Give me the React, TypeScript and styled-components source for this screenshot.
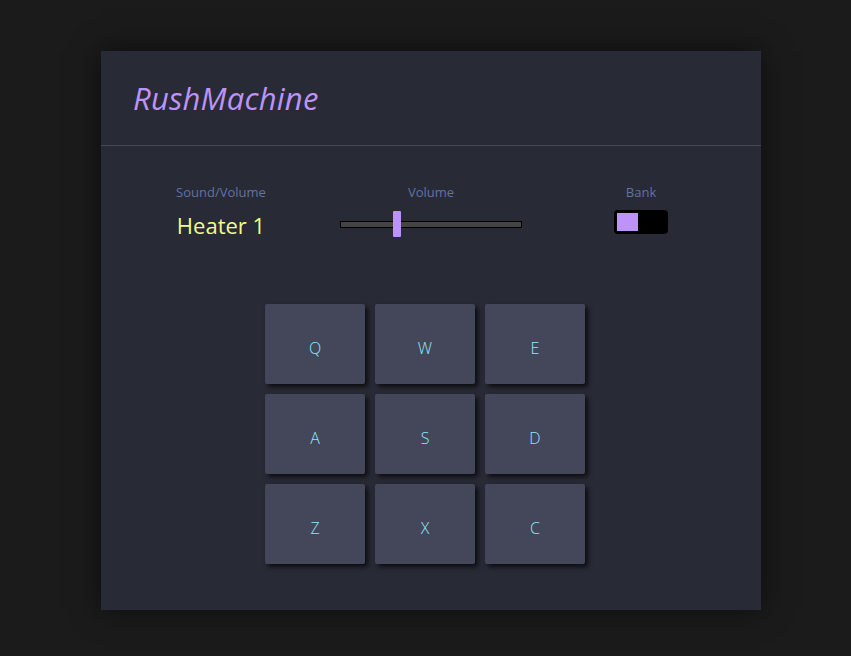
import React, {useState} from "react";
import styled, {createGlobalStyle} from "styled-components";

const GlobalStyle = createGlobalStyle`
  html, body {
    margin: 0;
    padding: 0;
    background-color: #1b1b1b;
    font-family: "Open Sans", "Noto Sans", sans-serif;
  }
`;

const StyledPage = styled.div`
  min-height: 656px;
  padding: 51px 0 0 101px;
  box-sizing: border-box;
`;

const StyledMachine = styled.div`
  width: 660px;
  height: 559px;
  background-color: #282a36;
  box-shadow: 0 0 28px rgba(0, 0, 0, 0.55);
  display: flex;
  flex-direction: column;
`;

const StyledHeader = styled.div`
  height: 94px;
  border-bottom: 1px solid #454757;
  display: flex;
  align-items: center;
  padding-left: 32px;
`;

const StyledTitle = styled.h1`
  margin: 0;
  font-size: 31px;
  font-weight: 400;
  font-style: italic;
  color: #bd93f9;
  letter-spacing: 0.2px;
`;

const StyledControls = styled.div`
  display: grid;
  grid-template-columns: repeat(3, 210px);
  padding: 37px 15px 0;
`;

const StyledControl = styled.div`
  display: flex;
  flex-direction: column;
  align-items: center;
`;

const StyledLabel = styled.div`
  font-size: 13px;
  line-height: 18px;
  color: #6272a4;
`;

const StyledDisplay = styled.div`
  margin-top: 9px;
  font-size: 22px;
  line-height: 30px;
  color: #f1fa8c;
`;

const StyledSliderBox = styled.div`
  height: 30px;
  margin-top: 8px;
  display: flex;
  align-items: center;
`;

const StyledRange = styled.input`
  -webkit-appearance: none;
  appearance: none;
  width: 182px;
  height: 7px;
  margin: 0;
  padding: 0;
  background: #444;
  border: 1px solid #000;
  box-sizing: border-box;
  outline: none;

  &::-webkit-slider-thumb {
    -webkit-appearance: none;
    width: 8px;
    height: 26px;
    background: #bd93f9;
    border: none;
    border-radius: 1px;
    cursor: pointer;
  }
`;

const StyledSwitch = styled.div<{ $on: boolean }>`
  margin-top: 9px;
  width: 54px;
  height: 24px;
  box-sizing: border-box;
  padding: 3px;
  background-color: #000;
  border-radius: 4px;
  display: flex;
  justify-content: ${({$on}) => $on ? "flex-end" : "flex-start"};
  cursor: pointer;
`;

const StyledKnob = styled.div`
  width: 21px;
  height: 18px;
  background-color: #bd93f9;
`;

const StyledPads = styled.div`
  display: grid;
  grid-template-columns: repeat(3, 100px);
  grid-auto-rows: 80px;
  gap: 10px;
  margin: 64px 0 0 164px;
`;

const StyledPad = styled.button`
  border: none;
  border-radius: 2px;
  padding: 7px 0 0;
  background-color: #44475a;
  box-shadow: 3px 3px 5px rgba(0, 0, 0, 0.7);
  color: #8be9fd;
  font-family: "Open Sans", "Noto Sans", sans-serif;
  font-size: 16px;
  font-weight: 300;
  cursor: pointer;

  &:active {
    box-shadow: none;
  }
`;

const pads = ["Q", "W", "E", "A", "S", "D", "Z", "X", "C"];

const App: React.FC = () => {
    const [volume, setVolume] = useState<number>(0.3)
    const [bank, setBank] = useState<boolean>(false)

    return <StyledPage>
        <GlobalStyle/>
        <StyledMachine>
            <StyledHeader>
                <StyledTitle>RushMachine</StyledTitle>
            </StyledHeader>
            <StyledControls>
                <StyledControl>
                    <StyledLabel>Sound/Volume</StyledLabel>
                    <StyledDisplay>Heater 1</StyledDisplay>
                </StyledControl>
                <StyledControl>
                    <StyledLabel>Volume</StyledLabel>
                    <StyledSliderBox>
                        <StyledRange type="range" min={0} max={1} step={0.01} value={volume}
                                     onChange={(e) => setVolume(Number(e.target.value))}/>
                    </StyledSliderBox>
                </StyledControl>
                <StyledControl>
                    <StyledLabel>Bank</StyledLabel>
                    <StyledSwitch $on={bank} onClick={() => setBank(!bank)}>
                        <StyledKnob/>
                    </StyledSwitch>
                </StyledControl>
            </StyledControls>
            <StyledPads>
                {pads.map((key) => <StyledPad key={key}>{key}</StyledPad>)}
            </StyledPads>
        </StyledMachine>
    </StyledPage>
}

export default App;
